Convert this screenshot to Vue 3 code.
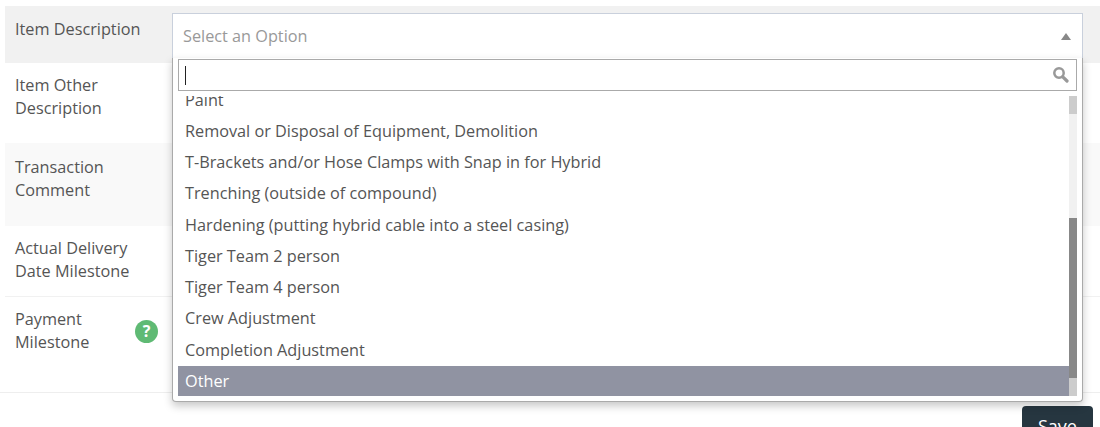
<template>
  <div class="page">
    <div class="form-table">
      <div v-for="row in rows" :key="row.label" class="row" :class="row.cls">
        <div class="label">
          <span class="label-text">{{ row.label }}</span>
          <span v-if="row.help" class="help">?</span>
        </div>
      </div>
    </div>
    <div class="actions">
      <button class="save">Save</button>
    </div>

    <div class="select">
      <div class="select-head">
        <span>Select an Option</span>
        <span class="arrow"></span>
      </div>
      <div class="drop">
        <div class="search">
          <span class="caret"></span>
          <svg class="search-icon" width="17" height="17" viewBox="0 0 17 17">
            <circle cx="7" cy="7" r="4.7" fill="none" stroke="#999" stroke-width="2.5" />
            <path d="M10.8 10.8L15 15" stroke="#999" stroke-width="3.2" stroke-linecap="round" />
          </svg>
        </div>
        <div class="list-wrap">
          <ul class="list">
            <li v-for="opt in options" :key="opt" :class="{ selected: opt === 'Other' }">{{ opt }}</li>
          </ul>
          <div class="scrollbar">
            <div class="sb-cap"></div>
            <div class="sb-track"></div>
            <div class="sb-thumb"></div>
            <div class="sb-cap"></div>
          </div>
        </div>
      </div>
    </div>
  </div>
</template>

<script setup>
const rows = [
  { label: 'Item Description', cls: 'r1' },
  { label: 'Item Other Description', cls: 'r2' },
  { label: 'Transaction Comment', cls: 'r3' },
  { label: 'Actual Delivery Date Milestone', cls: 'r4' },
  { label: 'Payment Milestone', cls: 'r5', help: true }
]

const options = [
  'Paint',
  'Removal or Disposal of Equipment, Demolition',
  'T-Brackets and/or Hose Clamps with Snap in for Hybrid',
  'Trenching (outside of compound)',
  'Hardening (putting hybrid cable into a steel casing)',
  'Tiger Team 2 person',
  'Tiger Team 4 person',
  'Crew Adjustment',
  'Completion Adjustment',
  'Other'
]
</script>

<style>
html,
body {
  margin: 0;
  overflow: hidden;
  background: #fff;
}
</style>

<style scoped>
.page {
  position: relative;
  width: 1100px;
  height: 427px;
  overflow: hidden;
  padding-top: 6px;
  box-sizing: border-box;
  font-family: "Open Sans", sans-serif;
  font-size: 16.25px;
  line-height: 23px;
  color: #555;
}

.form-table {
  border-bottom: 1px solid #eee;
}

.row {
  margin-left: 5px;
  padding: 11px 10px 0;
  box-sizing: border-box;
  border-bottom: 1px solid #f1f1f1;
}

.r1 { height: 57px; background: #f1f1f1; border-bottom: 0; padding-top: 12px; }
.r2 { height: 80px; border-bottom: 0; }
.r3 { height: 83px; background: #f9f9f9; padding-top: 13px; border-bottom: 0; }
.r4 { height: 71px; }
.r5 { height: 95px; border-bottom: 0; }

.label {
  display: flex;
  align-items: center;
  gap: 10px;
  width: 143px;
}

.label-text {
  flex: 1;
}

.help {
  flex: none;
  width: 23px;
  height: 23px;
  border-radius: 50%;
  background: #5fba74;
  color: #fff;
  font-size: 16px;
  font-weight: 700;
  line-height: 23px;
  text-align: center;
}

.actions {
  display: flex;
  justify-content: flex-end;
  padding: 13px 7px 0 0;
}

.save {
  width: 71px;
  height: 40px;
  border: 0;
  border-radius: 4px;
  background: #263640;
  color: #fff;
  font-family: inherit;
  font-size: 18px;
}

.select {
  position: absolute;
  left: 172px;
  top: 13px;
  width: 911px;
}

.select-head {
  height: 45px;
  box-sizing: border-box;
  display: flex;
  align-items: center;
  justify-content: space-between;
  padding: 0 11px 0 10px;
  border: 1px solid #c9d0dc;
  border-bottom: 0;
  background: #fff;
  color: #999;
}

.arrow {
  width: 0;
  height: 0;
  border-left: 5px solid transparent;
  border-right: 5px solid transparent;
  border-bottom: 7px solid #888;
}

.drop {
  background: #fff;
  border: 1px solid #aaa;
  border-top: 0;
  border-radius: 0 0 4px 4px;
  box-shadow: 0 4px 8px rgba(0, 0, 0, 0.22);
  padding: 1px 5px 5px;
}

.search {
  height: 32px;
  box-sizing: border-box;
  border: 1px solid #aaa;
  display: flex;
  align-items: center;
  justify-content: space-between;
  padding: 0 7px 0 6px;
}

.search-icon {
  margin-bottom: 2px;
}

.caret {
  width: 1px;
  height: 19px;
  background: #222;
}

.list-wrap {
  position: relative;
  height: 300px;
  margin-top: 5px;
  overflow: hidden;
}

.list {
  list-style: none;
  margin: -11.4px 0 0;
  padding: 0;
}

.list li {
  padding: 4px 7px;
  height: 31.25px;
  box-sizing: border-box;
  white-space: nowrap;
}

.list li.selected {
  background: #9093a2;
  color: #fff;
}

.scrollbar {
  position: absolute;
  top: 0;
  right: 0;
  bottom: 0;
  width: 8px;
  display: flex;
  flex-direction: column;
  background: #f1f1f1;
}

.sb-cap {
  height: 18px;
  background: #ccc;
}

.sb-track {
  height: 104px;
  background: #f1f1f1;
}

.sb-thumb {
  flex: 1;
  background: #888;
}
</style>
